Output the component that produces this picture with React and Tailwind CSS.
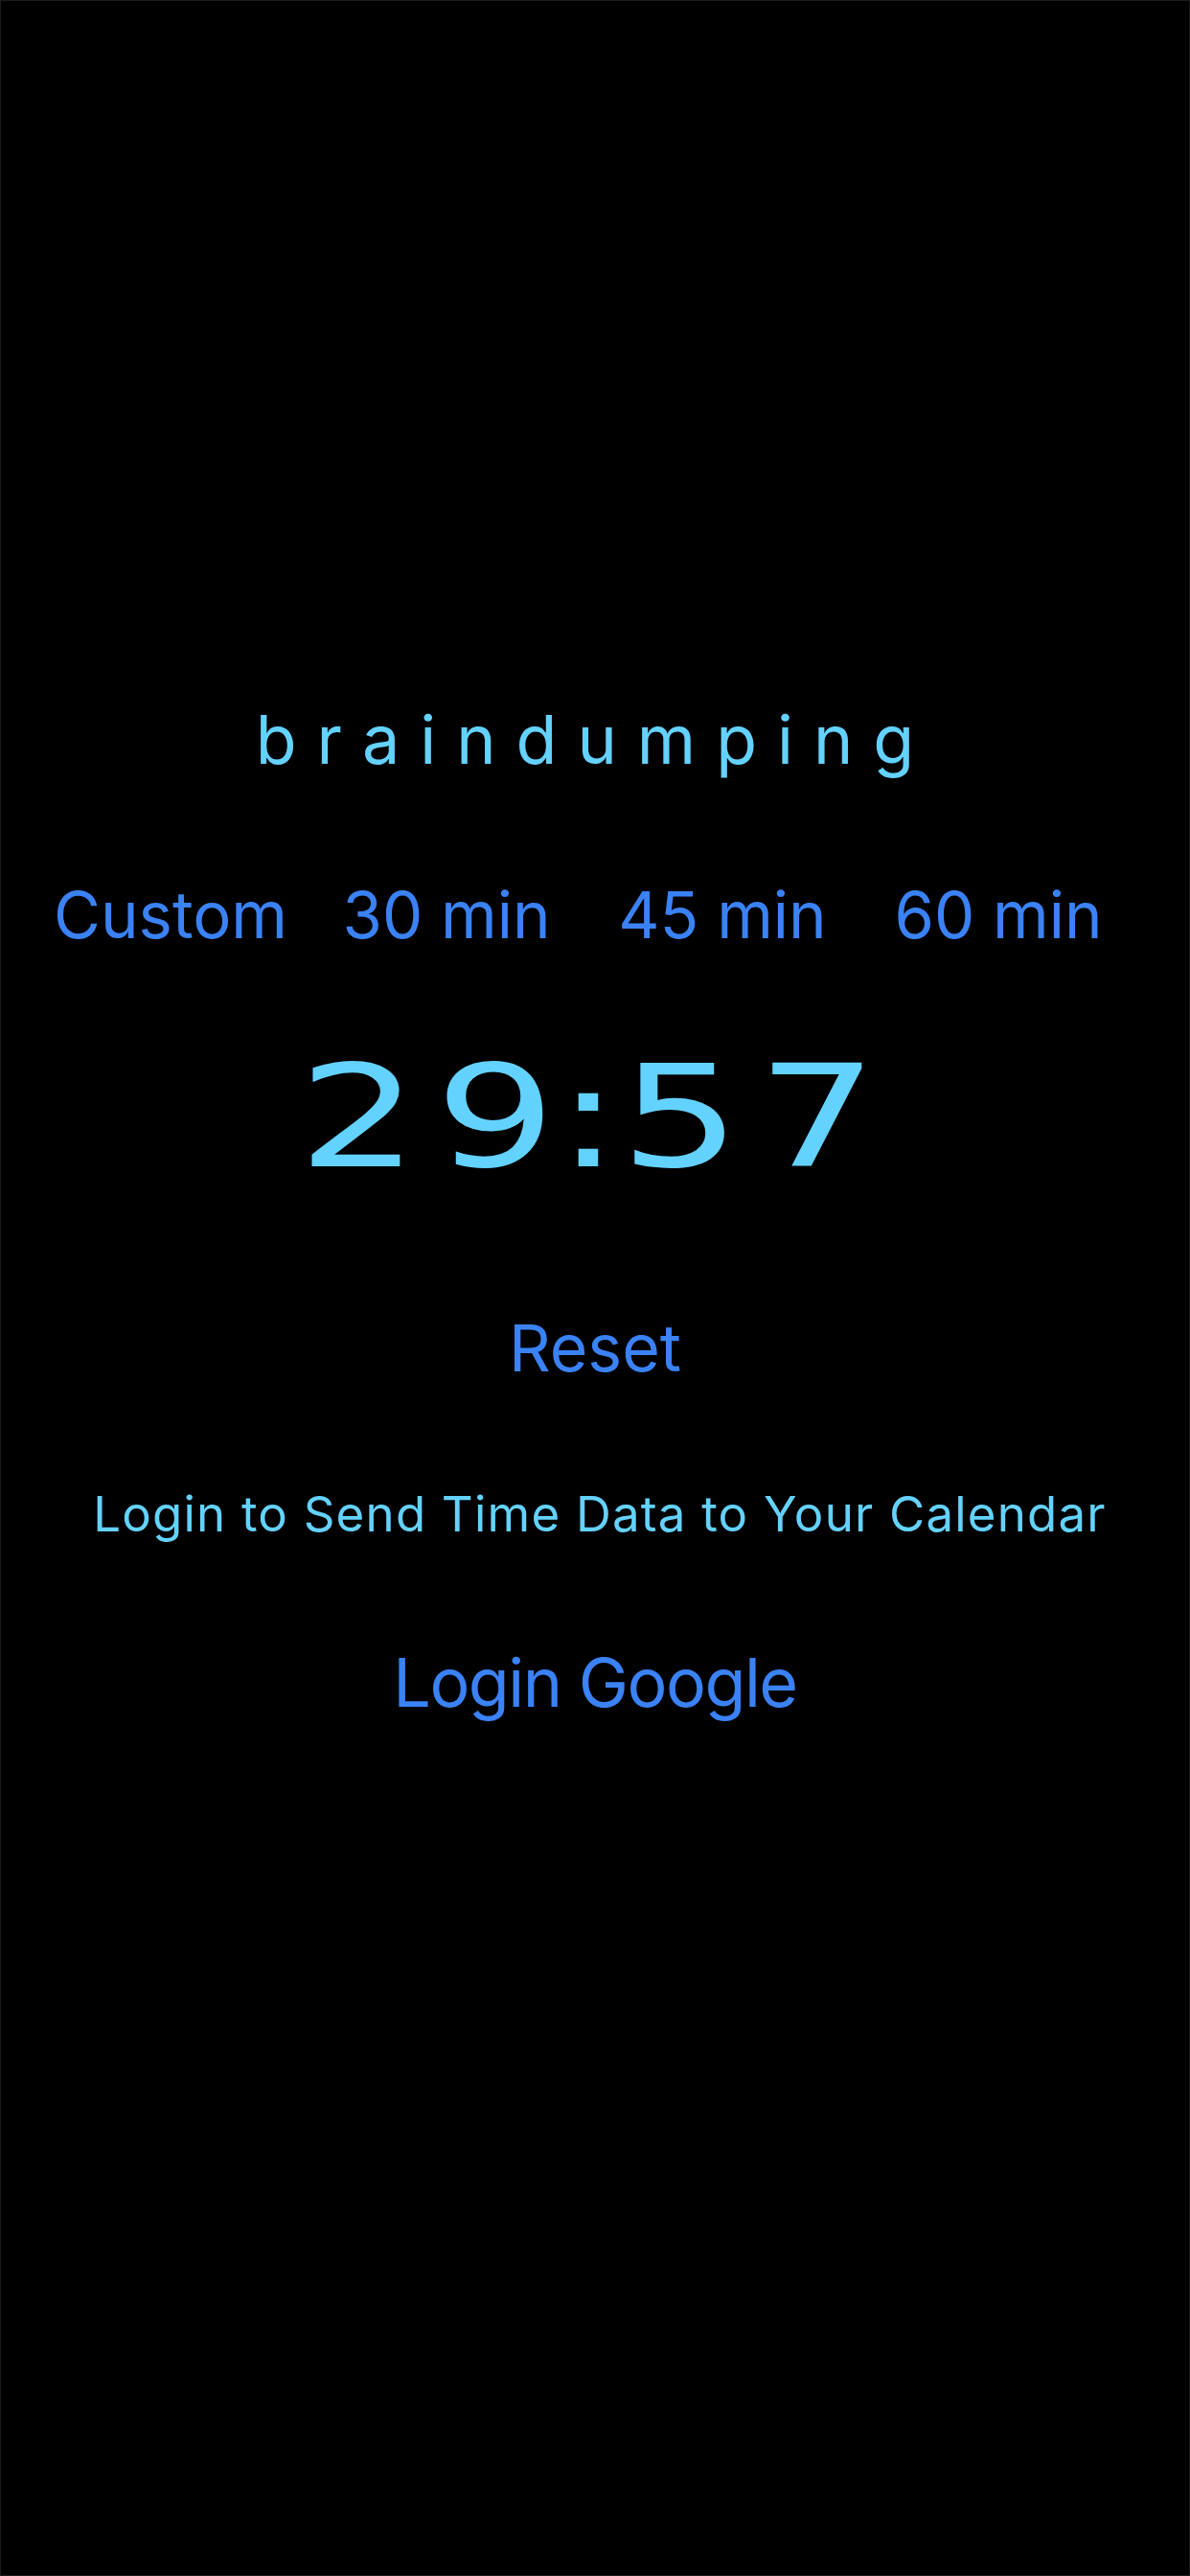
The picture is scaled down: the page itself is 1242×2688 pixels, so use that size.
import { useState } from "react";

const presets = ["Custom", "30 min", "45 min", "60 min"];

const TimerChar = function ({ ch }) {
    const isColon = ch === ":";
    return (
        <div className={isColon ? "w-[16px] flex justify-center" : "w-[109px] flex justify-center"}>
            <span className="inline-block scale-x-[1.34] origin-center">{ch}</span>
        </div>
    );
};

const App = function () {
    const [time] = useState("29:57");

    return (
        <div
            className="w-full min-h-screen bg-black border border-[#1c1c1c] flex flex-col items-center pt-[736px] pb-20"
            style={{ fontFamily: "Inter, 'Noto Sans', sans-serif" }}
        >
            <h1 className="text-[70px] leading-none font-normal tracking-[21px] text-[#64d2ff]">
                braindumping
            </h1>

            <div className="mt-[114px] w-full flex pl-[33px]">
                {presets.map((label) => (
                    <button
                        key={label}
                        className="w-[288px] text-center text-[67px] leading-none text-[#3a82f6]"
                    >
                        {label}
                    </button>
                ))}
            </div>

            <div
                className="mt-[104px] flex gap-[34px] text-[148px] leading-none text-[#64d2ff] pr-[14px]"
                style={{ fontFamily: "'DejaVu Sans', sans-serif" }}
            >
                {time.split("").map((ch, i) => (
                    <TimerChar key={i} ch={ch} />
                ))}
            </div>

            <button className="mt-[132px] text-[68px] leading-none text-[#3a82f6]">
                Reset
            </button>

            <p className="mt-[114px] pl-[10px] text-[51px] leading-none text-[#64d2ff] tracking-[1.2px]">
                Login to Send Time Data to Your Calendar
            </p>

            <button className="mt-[116px] text-[70px] leading-none tracking-[-1.5px] text-[#3a82f6]">
                Login Google
            </button>
        </div>
    );
};

export default App;
